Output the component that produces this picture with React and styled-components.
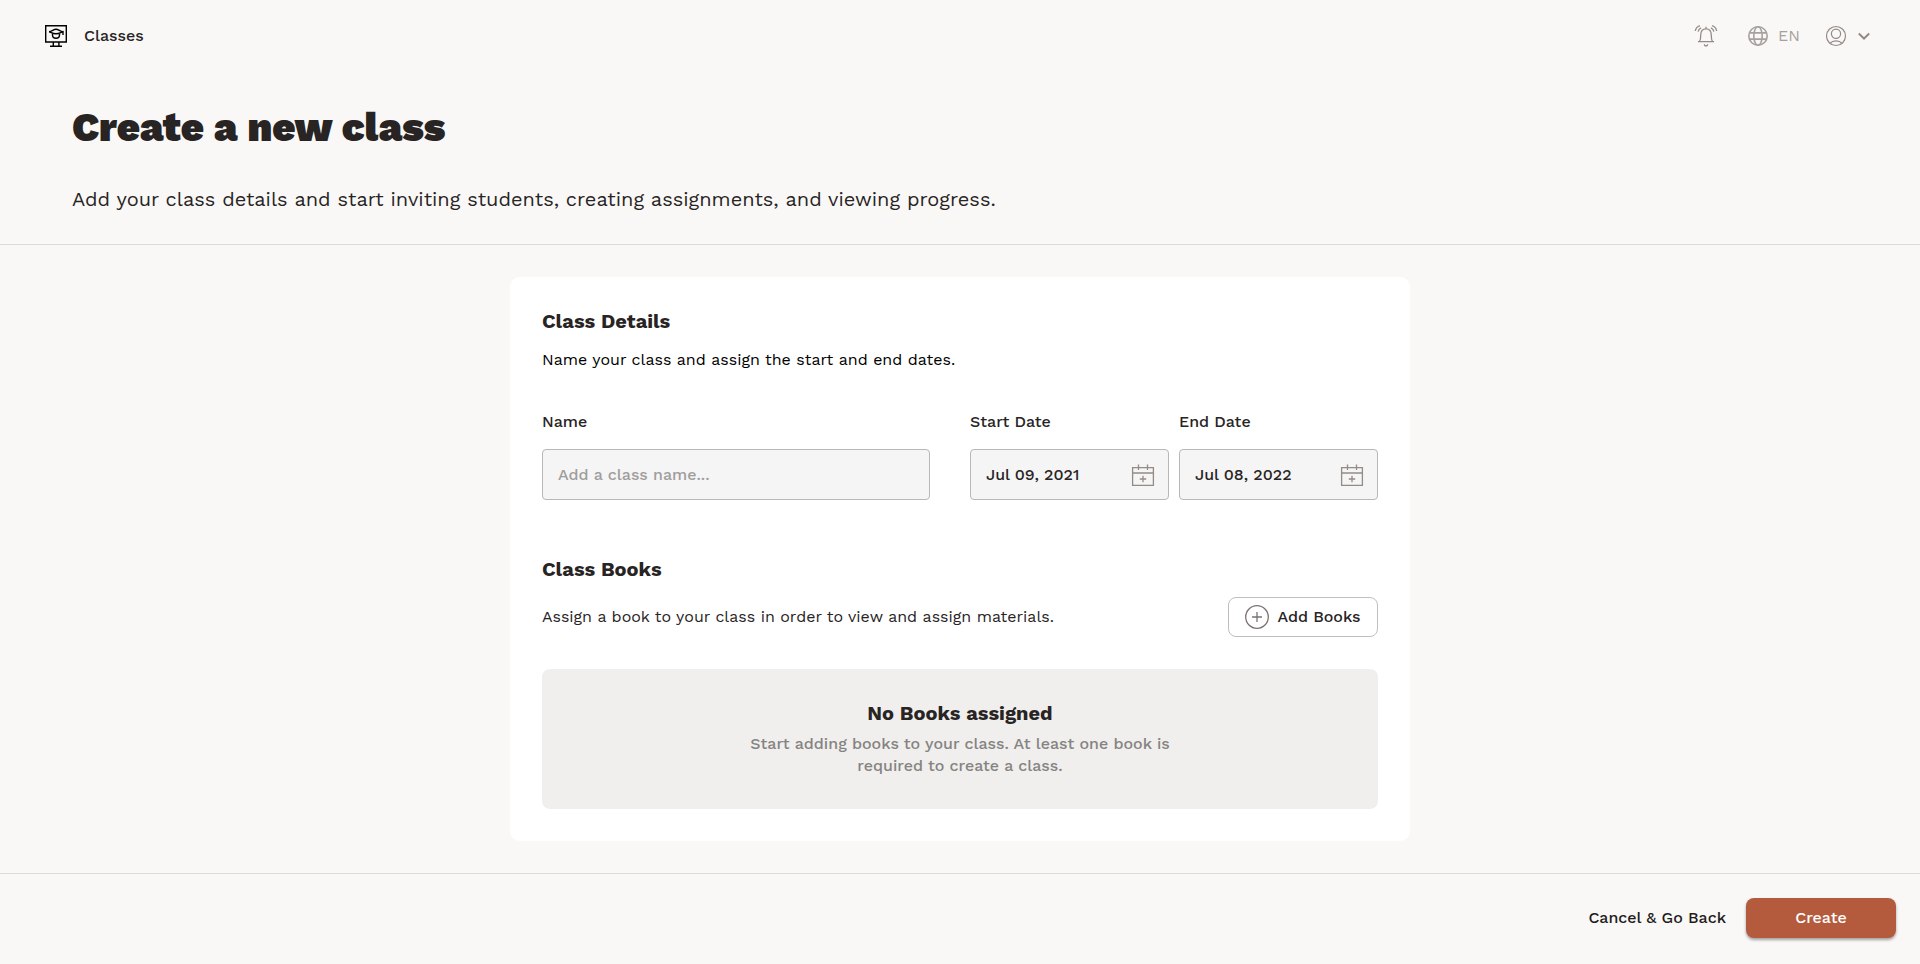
import React from "react";
import styled, { createGlobalStyle } from "styled-components";

const GlobalStyle = createGlobalStyle`
  *, *::before, *::after { box-sizing: border-box; }
  body {
    margin: 0;
    background: #f9f8f6;
    color: #282424;
    font-family: "Work Sans", Inter, sans-serif;
    font-size: 16px;
    line-height: 22px;
    -webkit-font-smoothing: antialiased;
  }
  h1, h2, h3, p { margin: 0; }
  button, input { font: inherit; color: inherit; }
  svg { display: block; flex: none; }
`;

const Page = styled.div`
  min-height: 100vh;
  display: flex;
  flex-direction: column;
`;

const TopBar = styled.header`
  height: 72px;
  padding: 0 50px 0 44px;
  display: flex;
  align-items: center;
  justify-content: space-between;
`;

const NavLink = styled.a`
  display: flex;
  align-items: center;
  gap: 16px;
  color: #282424;
  font-weight: 500;
  text-decoration: none;
`;

const Tools = styled.div`
  display: flex;
  align-items: center;
  gap: 28px;
`;

const ToolGroup = styled.div`
  display: flex;
  align-items: center;
  gap: 24px;
`;

const ToolButton = styled.button`
  display: flex;
  align-items: center;
  gap: ${(p) => p.$gap || "8px"};
  padding: 0;
  border: 0;
  background: none;
  color: ${(p) => p.$color || "#958b86"};
  cursor: pointer;
`;

const Intro = styled.section`
  padding: 32px 72px;
  border-bottom: 1px solid #dcdbda;
`;

const Title = styled.h1`
  font-size: 40px;
  line-height: 48px;
  font-weight: 900;
`;

const Lead = styled.p`
  margin-top: 34px;
  font-size: 20px;
  line-height: 26px;
`;

const Main = styled.main`
  flex: 1;
  padding: 32px;
`;

const Card = styled.form`
  max-width: 900px;
  margin: 0 auto;
  padding: 32px;
  border-radius: 10px;
  background: #fff;
`;

const Heading = styled.h2`
  font-size: 20px;
  line-height: 24px;
  font-weight: 700;
`;

const Text = styled.p`
  color: ${(p) => p.$color || "inherit"};
`;

const Details = styled.section`
  display: grid;
  gap: 16px;
`;

const Fields = styled.div`
  display: grid;
  grid-template-columns: minmax(0, 388fr) minmax(0, 408fr);
  gap: 40px;
  margin-top: 24px;
`;

const Dates = styled.div`
  display: flex;
  gap: 10px;
`;

const Field = styled.div`
  flex: 1;
  min-width: 0;
  display: flex;
  flex-direction: column;
  gap: 16px;
`;

const Label = styled.label`
  font-weight: 500;
`;

const InputBox = styled.div`
  display: flex;
  align-items: center;
  height: 51px;
  padding: 0 13px 0 15px;
  border: 1px solid #b9b8b7;
  border-radius: 4px;
  background: #f5f5f5;
`;

const Input = styled.input`
  flex: 1;
  min-width: 0;
  padding: 0;
  border: 0;
  outline: 0;
  background: none;
  font-weight: 500;
  &::placeholder { color: #9f9d9c; opacity: 1; }
`;

const Books = styled.section`
  margin-top: 57px;
`;

const BooksRow = styled.div`
  display: flex;
  align-items: center;
  justify-content: space-between;
  margin: 16px 0 32px;
`;

const Button = styled.button`
  display: flex;
  align-items: center;
  justify-content: center;
  gap: 8px;
  width: 150px;
  height: 40px;
  padding: 0;
  border: 1px solid #c1bfbe;
  border-radius: 8px;
  background: #fff;
  font-weight: 500;
  white-space: nowrap;
  cursor: pointer;
  svg { color: #7b7270; }
`;

const PrimaryButton = styled(Button)`
  border: 0;
  background: #b55b3d;
  color: #fff;
  box-shadow: 0 2px 3px rgba(0, 0, 0, 0.35);
`;

const CancelLink = styled.a`
  color: #1f1c1c;
  font-weight: 500;
  text-decoration: none;
`;

const Empty = styled.div`
  display: flex;
  flex-direction: column;
  align-items: center;
  gap: 8px;
  padding: 32px;
  border-radius: 8px;
  background: #f0efed;
  text-align: center;
`;

const EmptyText = styled.p`
  max-width: 440px;
  color: #858381;
  font-weight: 500;
`;

const Footer = styled.footer`
  display: flex;
  align-items: center;
  justify-content: flex-end;
  gap: 20px;
  padding: 24px 24px 26px;
  border-top: 1px solid #dcdbda;
`;

const Svg = ({ size = 24, stroke = 1, color = "currentColor", children }) => (
  <svg width={size} height={size} viewBox={`0 0 ${size} ${size}`} fill="none" stroke={color} strokeWidth={stroke} aria-hidden="true">
    {children}
  </svg>
);

const ClassIcon = () => (
  <Svg stroke="1.4" color="#000">
    <path d="M1.700 1.700h20.600v16.300H1.700z" />
    <path d="M9.300 18v4M14.900 18v4M6 22.300h12" />
    <path d="M5 7.700C8 7.400 9.500 5.200 12 5.200s4 2.200 7 2.500M5 7.700c2.500.5 3 2 7 2s4.500-1.500 7-2v3.300M8.500 8.700v2.300c0 2 1.500 3.200 3.500 3.200s3.500-1.200 3.500-3.200V8.700" />
  </Svg>
);

const BellIcon = () => (
  <Svg stroke="1.3">
    <path d="M12 2.800v2M4 17.600h16M5.600 17.500c1-1.500 1.100-3 1.100-6.200 0-4 2-6.400 5.300-6.400s5.300 2.400 5.300 6.400c0 3.200.1 4.700 1.100 6.200M10.300 20.300a1.700 1.700 0 0 0 3.400 0" />
    <path d="M1.300 7c.4-2.600 2-4.500 4.600-5.400M4.100 7.600c.4-1.700 1.400-2.900 2.900-3.700M22.700 7c-.4-2.600-2-4.500-4.600-5.400M19.900 7.600c-.4-1.700-1.400-2.900-2.900-3.700" />
  </Svg>
);

const GlobeIcon = () => (
  <Svg stroke="1.6">
    <circle cx="12" cy="12" r="9.200" />
    <ellipse cx="12" cy="12" rx="4.200" ry="9.200" />
    <path d="M3.400 8.900h17.200M3.400 15.100h17.200" />
  </Svg>
);

const UserIcon = () => (
  <Svg stroke="1.2">
    <circle cx="12" cy="12" r="9.500" />
    <circle cx="12" cy="9.800" r="4.600" />
    <path d="M6 19.300c1.500-1.800 3.500-2.500 6-2.500s4.500.7 6 2.500" />
  </Svg>
);

const ChevronIcon = () => (
  <Svg size={12} stroke="2">
    <path d="m.8 3.500 5.200 5 5.200-5" />
  </Svg>
);

const CalendarIcon = () => (
  <Svg stroke="1.300">
    <path d="M1.600 4.600h20.800v17.800H1.600zM1.600 10h20.800M7.500 1.500v5.500M16.500 1.500v5.500M12 12.800v6.400M8.800 16h6.400" />
  </Svg>
);

const PlusIcon = () => (
  <Svg stroke="1.300">
    <circle cx="12" cy="12" r="11.300" />
    <path d="M12 7v10M7 12h10" />
  </Svg>
);

const DateField = ({ id, label, value }) => (
  <Field>
    <Label htmlFor={id}>{label}</Label>
    <InputBox>
      <Input id={id} type="text" defaultValue={value} />
      <ToolButton type="button" aria-label={`Choose ${label}`}>
        <CalendarIcon />
      </ToolButton>
    </InputBox>
  </Field>
);

export default function App() {
  return (
    <>
      <GlobalStyle />
      <Page>
        <TopBar>
          <NavLink href="#classes">
            <ClassIcon />
            Classes
          </NavLink>
          <Tools>
            <ToolButton type="button" aria-label="Notifications"><BellIcon /></ToolButton>
            <ToolGroup>
              <ToolButton type="button" $color="#a7a19d"><GlobeIcon />EN</ToolButton>
              <ToolButton type="button" aria-label="Account" $gap="10px"><UserIcon /><ChevronIcon /></ToolButton>
            </ToolGroup>
          </Tools>
        </TopBar>
        <Intro>
          <Title>Create a new class</Title>
          <Lead>Add your class details and start inviting students, creating assignments, and viewing progress.</Lead>
        </Intro>
        <Main>
          <Card id="class-form">
            <Details>
              <Heading>Class Details</Heading>
              <Text $color="#000">Name your class and assign the start and end dates.</Text>
              <Fields>
                <Field>
                  <Label htmlFor="name">Name</Label>
                  <InputBox>
                    <Input id="name" type="text" placeholder="Add a class name..." />
                  </InputBox>
                </Field>
                <Dates>
                  <DateField id="start" label="Start Date" value="Jul 09, 2021" />
                  <DateField id="end" label="End Date" value="Jul 08, 2022" />
                </Dates>
              </Fields>
            </Details>
            <Books>
              <Heading>Class Books</Heading>
              <BooksRow>
                <Text>Assign a book to your class in order to view and assign materials.</Text>
                <Button type="button"><PlusIcon />Add Books</Button>
              </BooksRow>
              <Empty>
                <Heading as="h3">No Books assigned</Heading>
                <EmptyText>Start adding books to your class. At least one book is required to create a class.</EmptyText>
              </Empty>
            </Books>
          </Card>
        </Main>
        <Footer>
          <CancelLink href="#back">Cancel &amp; Go Back</CancelLink>
          <PrimaryButton type="submit" form="class-form">Create</PrimaryButton>
        </Footer>
      </Page>
    </>
  );
}
